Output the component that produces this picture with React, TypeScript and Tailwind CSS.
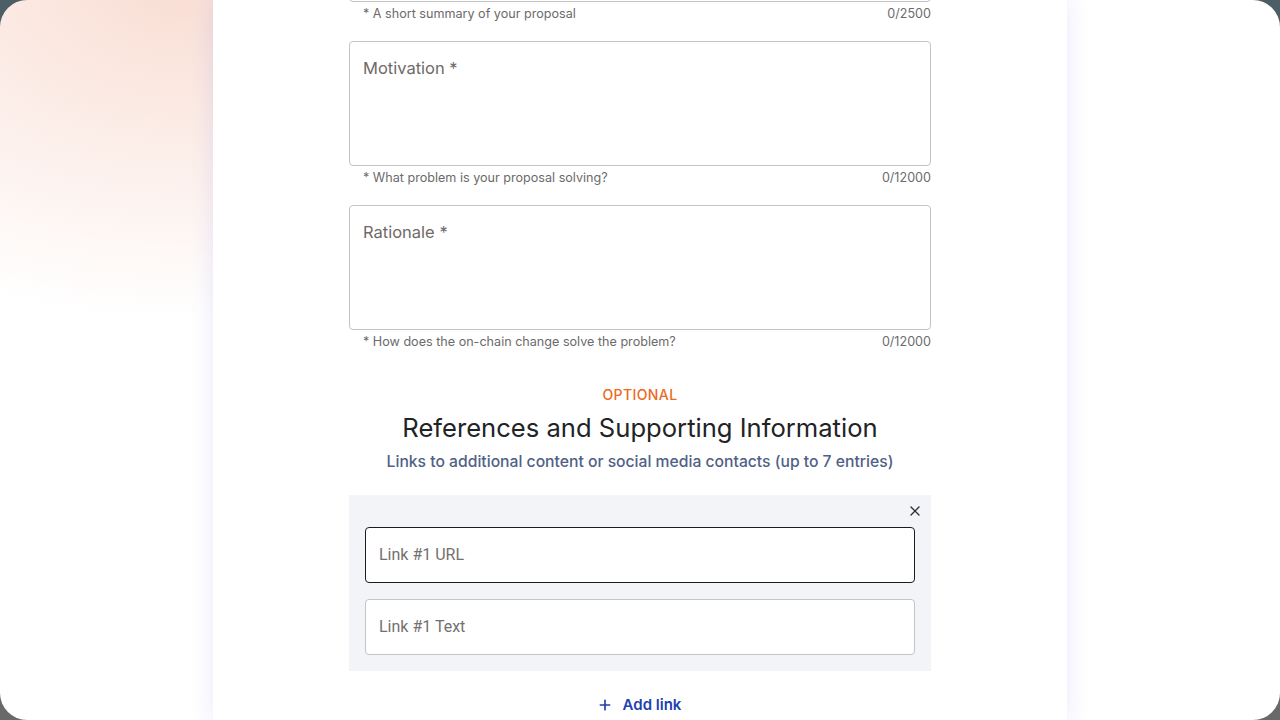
import { Plus, X } from 'lucide-react';

// Long-text fields of the proposal form
const FIELDS = [
  { label: 'Motivation', hint: '* What problem is your proposal solving?', max: 12000 },
  { label: 'Rationale', hint: '* How does the on-chain change solve the problem?', max: 12000 },
];

function Hint({ text, max }: { text: string; max: number }) {
  return (
    <div className="mt-[3px] flex h-[18px] items-center justify-between pl-[14px] text-[12.6px] leading-[18px] text-[#6b6b6b]">
      <span>{text}</span>
      <span>0/{max}</span>
    </div>
  );
}

function TextArea({ label }: { label: string }) {
  return (
    <div className="h-[125px] rounded-[4px] border border-[#c4c4c4] bg-white pl-[13px] pt-[14px]">
      <span className="text-[16.5px] leading-[24px] text-[#6f6a68]">{label} *</span>
    </div>
  );
}

function LinkInput({ placeholder, focused }: { placeholder: string; focused?: boolean }) {
  return (
    <div
      className={`flex h-[56px] items-center rounded-[4px] bg-white pl-[13px] ${
        focused ? 'border border-[#1c1c1c]' : 'border border-[#c4c4c4]'
      }`}
    >
      <span className="font-['Roboto',sans-serif] text-[16px] text-[#74706e]">{placeholder}</span>
    </div>
  );
}

export default function App() {
  return (
    <div className="h-[720px] w-[1280px] overflow-hidden bg-gradient-to-b from-[#4c5e65] to-[#696969] font-['Inter',sans-serif]">
      <div className="flex h-full justify-center overflow-hidden rounded-[27px] bg-white bg-[radial-gradient(520px_340px_at_190px_-20px,#f9ddd3,rgba(255,255,255,0))]">
        <div className="h-full w-[854px] bg-white shadow-[0_0_22px_rgba(110,120,230,0.16)]">
          <div className="mx-auto w-[582px]">
            {/* previous field, scrolled out of view */}
            <div className="-mt-[123px] h-[125px] rounded-[4px] border border-[#c4c4c4]" />
            <Hint text="* A short summary of your proposal" max={2500} />

            {FIELDS.map((f) => (
              <div key={f.label} className="mt-[18px]">
                <TextArea label={f.label} />
                <Hint text={f.hint} max={f.max} />
              </div>
            ))}

            {/* Optional section */}
            <div className="mt-[34px] text-center">
              <div className="text-[14px] font-medium leading-[20px] tracking-[0.4px] text-[#ec6a1e]">OPTIONAL</div>
              <h2 className="mt-[7px] text-[25.6px] leading-[32px] text-[#222326]">References and Supporting Information</h2>
              <p className="mt-[7px] text-[15.7px] font-medium leading-[22px] text-[#506186]">
                Links to additional content or social media contacts (up to 7 entries)
              </p>
            </div>

            <div className="mt-[22px] bg-[#f3f4f8] px-4 pb-4 pt-2">
              <div className="flex h-4 justify-end -mr-2">
                <X className="h-4 w-4 text-[#2a2f3a]" strokeWidth={2} />
              </div>
              <div className="mt-2 flex flex-col gap-4">
                <LinkInput placeholder="Link #1 URL" focused />
                <LinkInput placeholder="Link #1 Text" />
              </div>
            </div>

            <div className="mt-[23px] flex items-center justify-center gap-[10px] pr-[2px] text-[#2140b0]">
              <Plus className="h-4 w-4" strokeWidth={2.5} />
              <span className="text-[15px] font-semibold leading-[22px]">Add link</span>
            </div>
          </div>
        </div>
      </div>
    </div>
  );
}
